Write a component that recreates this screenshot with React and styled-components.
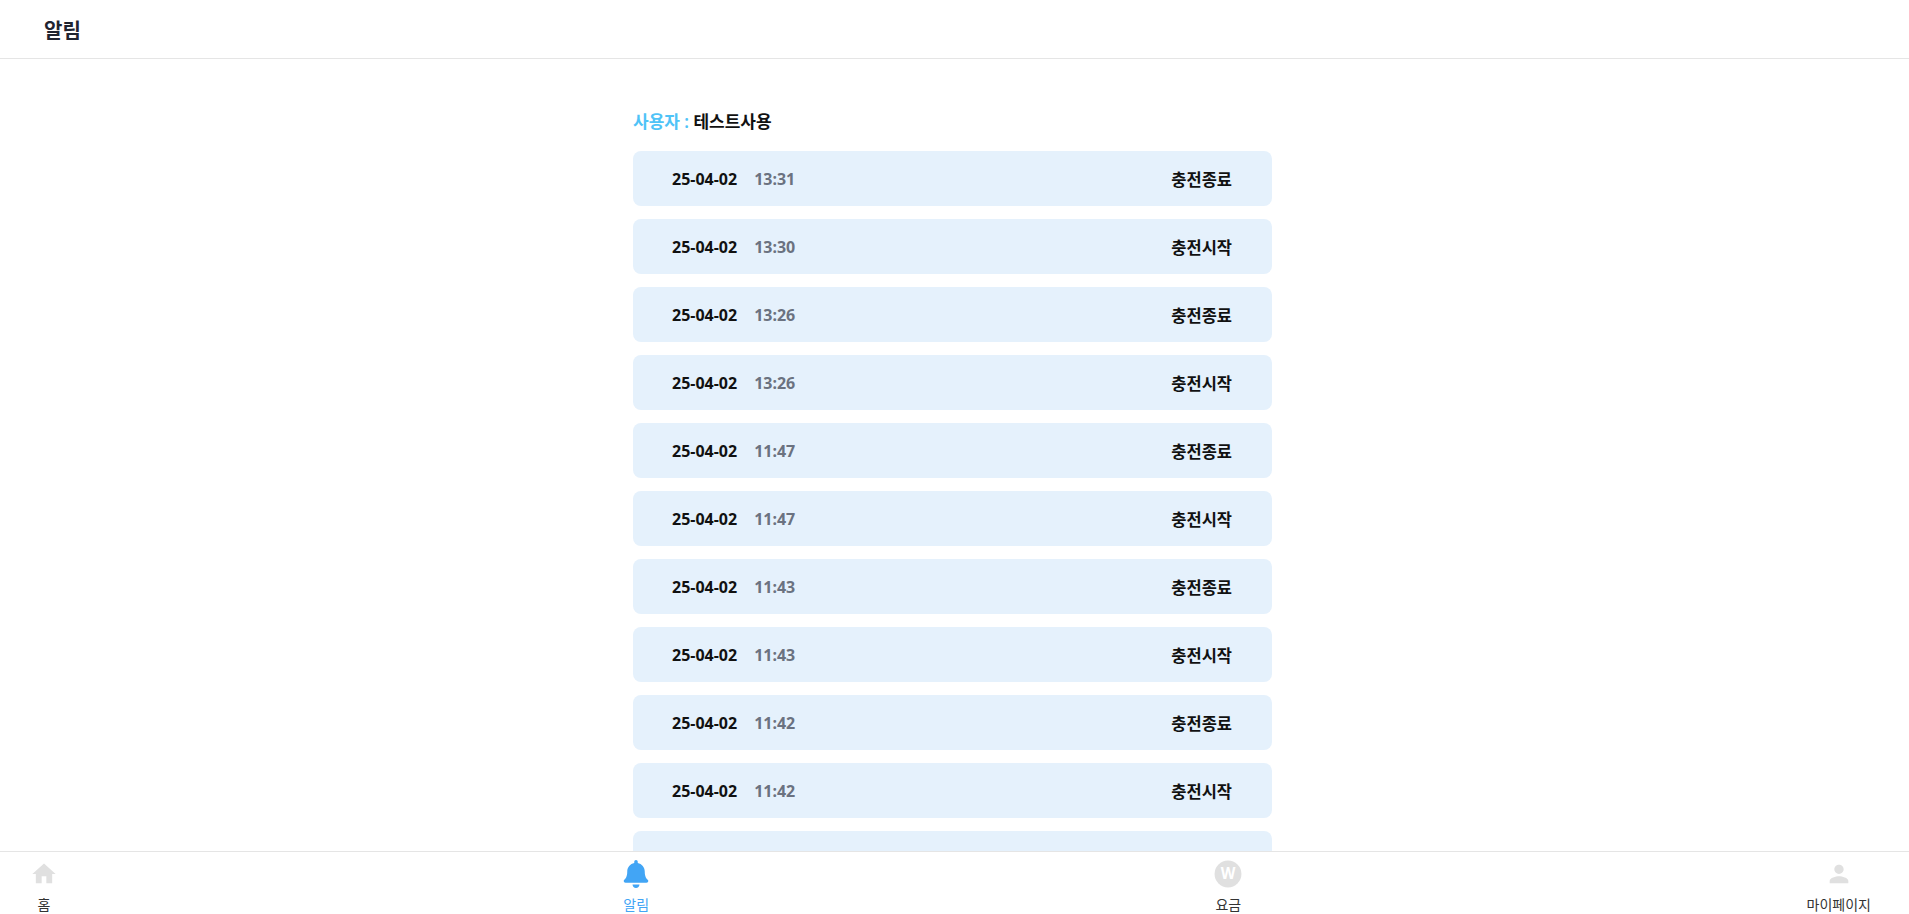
import React from "react";
import styled, { createGlobalStyle } from "styled-components";
import { MdHome, MdPerson } from "react-icons/md";
import { FaBell } from "react-icons/fa";

const GlobalStyle = createGlobalStyle`
  body {
    margin: 0;
    background: #fff;
    font-family: "Noto Sans", "Noto Sans CJK KR", sans-serif;
    color: #111;
  }
`;

const Header = styled.header`
  height: 58px;
  border-bottom: 1px solid #e5e5e5;
  display: flex;
  align-items: center;
  padding-left: 44px;
  font-size: 20px;
  font-weight: 700;
  color: #1f2430;
`;

const Main = styled.main`
  width: 639px;
  margin: 0 auto;
  padding: 49px 0 80px;
  transform: translateX(-2px);
`;

const UserLine = styled.div`
  font-size: 17px;
  font-weight: 600;
  margin-bottom: 18px;

  span {
    color: #4fc3f7;
  }
`;

const Card = styled.div`
  height: 55px;
  border-radius: 8px;
  background: #e5f1fc;
  display: flex;
  align-items: center;
  justify-content: space-between;
  padding: 0 40px 0 39px;
  margin-bottom: 13px;
  font-size: 16px;
  font-weight: 700;
`;

const Status = styled.div`
  font-size: 16.5px;
`;

const Time = styled.span`
  color: #6b7280;
  margin-left: 17px;
`;

const Nav = styled.nav`
  position: fixed;
  left: 0;
  right: 0;
  bottom: 0;
  height: 62px;
  background: #fff;
  border-top: 1px solid #e5e5e5;
  display: flex;
  justify-content: space-between;
  padding: 0 38px 0 30px;
`;

const NavItem = styled.div`
  display: flex;
  flex-direction: column;
  align-items: center;
  padding-top: 8px;
  font-size: 14px;
  color: ${(p) => (p.$active ? "#42a5f5" : "#333")};

  svg {
    color: ${(p) => (p.$active ? "#42a5f5" : "#e0e0e0")};
    width: 28px;
    height: 28px;
    margin-bottom: 6px;
  }
`;

const WonIcon = () => (
  <svg viewBox="0 0 24 24">
    <circle cx="12" cy="12" r="11.5" fill="currentColor" />
    <text x="12" y="16.5" textAnchor="middle" fontSize="13" fontWeight="700" fill="#fff" fontFamily="Noto Sans, sans-serif">W</text>
  </svg>
);

const rows = [
  ["13:31", "충전종료"], ["13:30", "충전시작"], ["13:26", "충전종료"], ["13:26", "충전시작"],
  ["11:47", "충전종료"], ["11:47", "충전시작"], ["11:43", "충전종료"], ["11:43", "충전시작"],
  ["11:42", "충전종료"], ["11:42", "충전시작"], ["11:40", "충전종료"],
];

export default function App() {
  return (
    <>
      <GlobalStyle />
      <Header>알림</Header>
      <Main>
        <UserLine><span>사용자 : </span>테스트사용</UserLine>
        {rows.map(([t, s], i) => (
          <Card key={i}>
            <div>25-04-02<Time>{t}</Time></div>
            <Status>{s}</Status>
          </Card>
        ))}
      </Main>
      <Nav>
        <NavItem><MdHome />홈</NavItem>
        <NavItem $active><FaBell />알림</NavItem>
        <NavItem><WonIcon />요금</NavItem>
        <NavItem><MdPerson />마이페이지</NavItem>
      </Nav>
    </>
  );
}
